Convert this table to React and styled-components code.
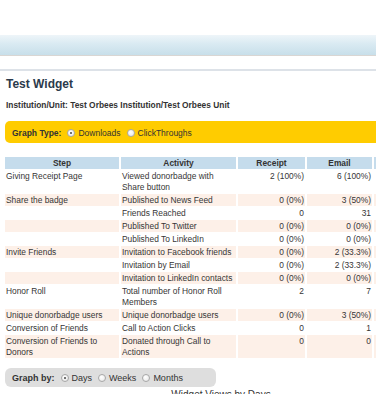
import React from "react";
import styled, { createGlobalStyle } from "styled-components";

const GlobalStyle = createGlobalStyle`
  body {
    margin: 0;
    overflow: hidden;
    background: #fff;
    font-family: "Liberation Sans", Arial, sans-serif;
    color: #333;
  }
`;

const Page = styled.div`
  width: 470px;
`;

const TopSpace = styled.div`
  height: 35px;
`;

const BlueBar = styled.div`
  height: 20px;
  background: linear-gradient(to bottom, #eef5f9 0%, #d9eaf2 45%, #c8dfea 100%);
  border-bottom: 1px solid #d9d6d3;
`;

const Panel = styled.div`
  margin-top: 13px;
  border-top: 2px solid #dde2e8;
  padding: 6px 5px 0;
`;

const Title = styled.h2`
  margin: 0 0 0 1px;
  font-size: 12px;
  line-height: 14px;
  font-weight: bold;
  color: #2b3a4b;
`;

const Institution = styled.div`
  margin: 9px 0 0 1px;
  font-size: 8.4px;
  line-height: 10px;
  font-weight: bold;
  color: #333;
`;

const OptionBar = styled.div`
  display: flex;
  align-items: center;
  box-sizing: border-box;
  height: ${(p) => p.$height}px;
  width: ${(p) => (p.$width ? `${p.$width}px` : "auto")};
  margin-top: ${(p) => p.$top}px;
  padding: 1px 0 0 7px;
  background: ${(p) => p.$bg};
  border-radius: ${(p) => p.$radius}px;
  font-size: ${(p) => p.$size}px;
  color: #333;
`;

const OptionLabel = styled.span`
  font-weight: bold;
  margin-right: 4px;
`;

const Radio = styled.span`
  display: inline-block;
  position: relative;
  width: 8px;
  height: 8px;
  box-sizing: border-box;
  border-radius: 50%;
  border: 1px solid #a8a8a8;
  background: radial-gradient(circle at 40% 35%, #ffffff 0%, #e4e4e4 100%);
  margin: 0 3px 0 2px;

  &::after {
    content: "";
    display: ${(p) => (p.$checked ? "block" : "none")};
    position: absolute;
    left: 2px;
    top: 2px;
    width: 2px;
    height: 2px;
    border-radius: 50%;
    background: #444;
  }
`;

const Choice = styled.span`
  margin-right: 4px;
`;

const Table = styled.table`
  margin-top: 13px;
  border-collapse: separate;
  border-spacing: 2px 1px;
  table-layout: fixed;
  width: 443px;
  margin-left: -2px;
  font-size: 8.4px;
  line-height: 11px;
  color: #363636;
`;

const HeadCell = styled.th`
  background: #c5dcec;
  font-weight: bold;
  text-align: center;
  padding: 1px 0 0;
  color: #333;
`;

const Cell = styled.td`
  background: ${(p) => (p.$alt ? "#fdf0e8" : "#fff")};
  text-align: ${(p) => (p.$num ? "right" : "left")};
  vertical-align: top;
  padding: 1px 1px 0;
`;

const ChartTitle = styled.div`
  width: 432px;
  margin-top: 2px;
  text-align: center;
  font-size: 10px;
  line-height: 12px;
  color: #333;
`;

const rows = [
  ["Giving Receipt Page", "Viewed donorbadge with Share button", "2 (100%)", "6 (100%)"],
  ["Share the badge", "Published to News Feed", "0 (0%)", "3 (50%)"],
  ["", "Friends Reached", "0", "31"],
  ["", "Published To Twitter", "0 (0%)", "0 (0%)"],
  ["", "Published To LinkedIn", "0 (0%)", "0 (0%)"],
  ["Invite Friends", "Invitation to Facebook friends", "0 (0%)", "2 (33.3%)"],
  ["", "Invitation by Email", "0 (0%)", "2 (33.3%)"],
  ["", "Invitation to LinkedIn contacts", "0 (0%)", "0 (0%)"],
  ["Honor Roll", "Total number of Honor Roll Members", "2", "7"],
  ["Unique donorbadge users", "Unique donorbadge users", "0 (0%)", "3 (50%)"],
  ["Conversion of Friends", "Call to Action Clicks", "0", "1"],
  ["Conversion of Friends to Donors", "Donated through Call to Actions", "0", "0"],
];

function RadioGroup({ label, options, checked, ...bar }) {
  return (
    <OptionBar {...bar}>
      <OptionLabel>{label}</OptionLabel>
      {options.map((o) => (
        <React.Fragment key={o}>
          <Radio $checked={o === checked} />
          <Choice>{o}</Choice>
        </React.Fragment>
      ))}
    </OptionBar>
  );
}

export default function App() {
  return (
    <Page>
      <GlobalStyle />
      <TopSpace />
      <BlueBar />
      <Panel>
        <Title>Test Widget</Title>
        <Institution>Institution/Unit: Test Orbees Institution/Test Orbees Unit</Institution>

        <RadioGroup
          label="Graph Type:"
          options={["Downloads", "ClickThroughs"]}
          checked="Downloads"
          $height={22}
          $top={11}
          $bg="#ffcc00"
          $radius={5}
          $size={8.5}
        />

        <Table>
          <colgroup>
            <col style={{ width: 114 }} />
            <col style={{ width: 115 }} />
            <col style={{ width: 67 }} />
            <col style={{ width: 65 }} />
            <col style={{ width: 70 }} />
          </colgroup>
          <thead>
            <tr>
              <HeadCell>Step</HeadCell>
              <HeadCell>Activity</HeadCell>
              <HeadCell>Receipt</HeadCell>
              <HeadCell>Email</HeadCell>
              <HeadCell />
            </tr>
          </thead>
          <tbody>
            {rows.map((r, i) => (
              <tr key={i}>
                <Cell $alt={i % 2 === 1}>{r[0]}</Cell>
                <Cell $alt={i % 2 === 1}>{r[1]}</Cell>
                <Cell $alt={i % 2 === 1} $num>{r[2]}</Cell>
                <Cell $alt={i % 2 === 1} $num>{r[3]}</Cell>
                <Cell $alt={i % 2 === 1} $num />
              </tr>
            ))}
          </tbody>
        </Table>

        <RadioGroup
          label="Graph by:"
          options={["Days", "Weeks", "Months"]}
          checked="Days"
          $height={19}
          $top={9}
          $bg="#dedede"
          $radius={6}
          $size={9}
          $width={211}
        />

        <ChartTitle>Widget Views by Days</ChartTitle>
      </Panel>
    </Page>
  );
}
